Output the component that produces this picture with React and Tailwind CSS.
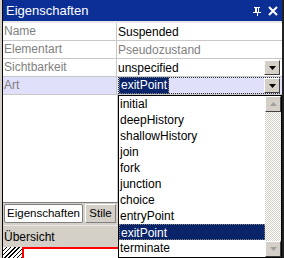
import React from 'react';

const items = ['initial', 'deepHistory', 'shallowHistory', 'join', 'fork', 'junction', 'choice', 'entryPoint', 'exitPoint', 'terminate'];

function DropBtn() {
  return (
    <div className="w-[16px] h-[15px] bg-[#d4d0c8] border border-t-white border-l-white border-r-[#404040] border-b-[#404040] flex items-center justify-center">
      <svg width="7" height="4" viewBox="0 0 7 4"><path d="M0 0h7L3.5 4z" fill="#000" /></svg>
    </div>
  );
}

function Row({ label, children, active }) {
  return (
    <div className={`flex h-[18px] border-b border-[#c8c8c8] ${active ? 'bg-[#e0e0fa]' : 'bg-white'}`}>
      <div className="w-[114px] border-r border-[#c8c8c8] pl-[1px] text-[#808080] leading-[17px]">{label}</div>
      <div className="flex-1 flex items-center pl-[1px] pr-[2px]">{children}</div>
    </div>
  );
}

export default function App() {
  return (
    <div className="w-[284px] h-[258px] overflow-hidden bg-[#d4d0c8] border-l-2 border-[#d4d0c8] text-[12px] text-black" style={{ fontFamily: '"Liberation Sans", Arial, sans-serif' }}>
      <div className="h-full border-l border-r-2 border-[#000] border-r-[#202020] flex flex-col">
        <div className="h-[21px] bg-[#0c2f96] text-white flex items-center pl-[3px] pr-[4px] text-[13px]">
          <span className="flex-1">Eigenschaften</span>
          <svg width="10" height="10" viewBox="0 0 10 10" className="mr-[6px]"><path d="M2 1h6v1H7v4h2v1H6v3H5V7H1V6h2V2H2z" fill="#fff" /><path d="M5 2h1v4H5z" fill="#0c2f96" /></svg>
          <svg width="10" height="10" viewBox="0 0 10 10"><path d="M1 1l8 8M9 1L1 9" stroke="#fff" strokeWidth="2" /></svg>
        </div>
        <div className="h-[2px] bg-[#e8e8e8]" />
        <Row label="Name"><span>Suspended</span></Row>
        <Row label="Elementart"><span className="text-[#808080]">Pseudozustand</span></Row>
        <Row label="Sichtbarkeit">
          <span className="flex-1">unspecified</span>
          <DropBtn />
        </Row>
        <Row label="Art" active>
          <div className="flex-1 h-full flex items-center border border-dotted border-[#303030]">
            <span className="bg-[#0a246a] text-white leading-[15px] px-[1px] border border-dotted border-[#808080]">exitPoint</span>
            <span className="flex-1" />
            <div className="mr-[-1px]"><DropBtn /></div>
          </div>
        </Row>
        <div className="flex-1 flex">
          <div className="w-[115px] flex flex-col">
            <div className="flex-1 bg-white border-r border-[#c8c8c8]" />
            <div className="h-[23px] flex items-start gap-[2px] pl-[1px] pt-[1px] bg-[#d4d0c8] border-t border-[#808080] text-[11.5px]">
              <div className="h-[19px] w-[79px] bg-white border border-[#808080] rounded-[2px] flex items-center justify-center">Eigenschaften</div>
              <div className="h-[19px] w-[31px] bg-[#d4d0c8] border border-t-white border-l-white border-r-[#808080] border-b-[#808080] flex items-center justify-center">Stile</div>
            </div>
            <div className="h-[22px] flex items-center pl-[1px] text-[12px] border-t border-[#e8e8e8]">Übersicht</div>
            <div className="h-[11px] flex">
              <div className="w-[19px] bg-[repeating-linear-gradient(-45deg,#000_0_1px,#fff_1px_3px)]" />
              <div className="flex-1 bg-white border-l-2 border-t-2 border-[#ff0000]" />
            </div>
          </div>
          <div className="flex-1 bg-white border border-black flex">
            <div className="flex-1 flex flex-col">
              {items.map((it) => (
                <div key={it} className={`h-[16px] leading-[16px] pl-[1px] ${it === 'exitPoint' ? 'bg-[#0a246a] text-white border border-dotted border-[#808080] leading-[14px]' : ''}`}>{it}</div>
              ))}
            </div>
            <div className="w-[16px] flex flex-col bg-[repeating-conic-gradient(#d4d0c8_0_25%,#ffffff_0_50%)] bg-[length:2px_2px]">
              <div className="h-[16px] bg-[#d4d0c8] border border-t-white border-l-white border-r-[#404040] border-b-[#404040] flex items-center justify-center">
                <svg width="7" height="4" viewBox="0 0 7 4"><path d="M3.5 0L7 4H0z" fill="#a0a0a0" /></svg>
              </div>
              <div className="flex-1" />
              <div className="h-[16px] bg-[#d4d0c8] border border-t-white border-l-white border-r-[#404040] border-b-[#404040] flex items-center justify-center">
                <svg width="7" height="4" viewBox="0 0 7 4"><path d="M0 0h7L3.5 4z" fill="#a0a0a0" /></svg>
              </div>
            </div>
          </div>
        </div>
      </div>
    </div>
  );
}
